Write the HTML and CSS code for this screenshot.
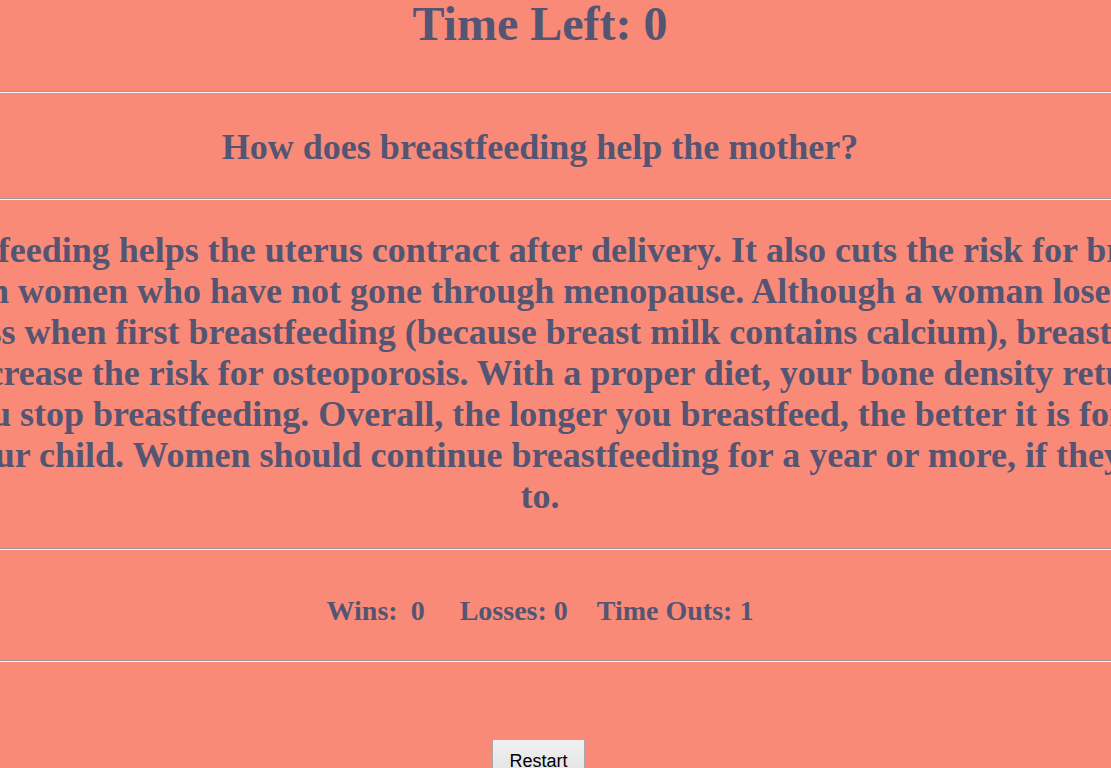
FILE: index.html
```html
<!DOCTYPE html>
<html>
<head>
<meta charset="utf-8">
<link rel="stylesheet" href="styles.css">
</head>
<body>
<div class="page">
  <h1 class="timer">Time Left: 0</h1>
  <hr class="rule">
  <h2 class="question">How does breastfeeding help the mother?</h2>
  <hr class="rule">
  <p class="answer">Breastfeeding helps the uterus contract after delivery. It also cuts the risk for breast<br>cancer in women who have not gone through menopause. Although a woman loses some<br>bone mass when first breastfeeding (because breast milk contains calcium), breastfeeding<br>does not increase the risk for osteoporosis. With a proper diet, your bone density returns after<br>you stop breastfeeding. Overall, the longer you breastfeed, the better it is for<br>you and your child. Women should continue breastfeeding for a year or more, if they are able<br>to.</p>
  <hr class="rule">
  <div class="stats">
    <span class="stat">Wins:<span class="num">0</span></span>
    <span class="stat">Losses: 0</span>
    <span class="stat">Time Outs: 1</span>
  </div>
  <hr class="rule">
  <div class="actions">
    <button class="restart">Restart</button>
  </div>
</div>
</body>
</html>
```

FILE: styles.css
```css
html, body {
  margin: 0;
  padding: 0;
}
body {
  background: #f98a77;
  color: #545573;
  font-family: "Liberation Serif", "Times New Roman", serif;
  font-weight: bold;
  overflow: hidden;
  height: 768px;
}
.page {
  width: 1600px;
  margin-left: -260px;
  text-align: center;
}
.timer {
  margin: 0;
  font-size: 48px;
  line-height: 48px;
  font-weight: bold;
}
.rule {
  margin: 0;
  height: 0;
  border: 0;
  border-top: 1px solid #9c9c9c;
  border-bottom: 1px solid #f4f4f4;
}
.timer + .rule {
  margin-top: 43px;
}
.question {
  margin: 34px 0 30px;
  font-size: 36px;
  line-height: 41px;
}
.answer {
  margin: 30px 0 31px;
  font-size: 36px;
  line-height: 41px;
  white-space: nowrap;
}
.stats {
  margin: 45px 0 33px;
  font-size: 28px;
  line-height: 32px;
  display: flex;
  justify-content: center;
}
.stat + .stat {
  margin-left: 35px;
}
.stat:last-child {
  margin-left: 29px;
}
.num {
  margin-left: 13px;
}
.actions {
  padding-top: 77px;
  padding-right: 3px;
  display: flex;
  justify-content: center;
}
.restart {
  font-family: "Liberation Sans", Arial, sans-serif;
  font-size: 18px;
  color: #000;
  background: linear-gradient(#f0f0f0, #e2e2e2);
  border: 1px solid #a8a8a8;
  border-radius: 0;
  padding: 11px 16px 8px;
  width: 93px;
}
```
